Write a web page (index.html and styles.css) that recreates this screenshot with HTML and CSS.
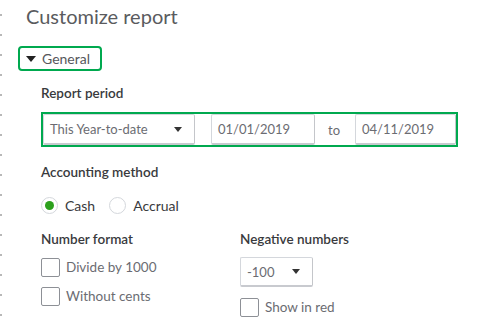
FILE: index.html
```html
<!DOCTYPE html>
<html lang="en">
<head>
	<meta charset="UTF-8">
	<title>Customize report</title>
	<link rel="stylesheet" href="styles.css">
</head>
<body>
	<div class="panel">
		<h1 class="title">Customize report</h1>

		<div class="section-toggle">
			<span class="caret"></span>
			<span>General</span>
		</div>

		<div class="section">
			<div class="label">Report period</div>
			<div class="period">
				<div class="select period-select">
					<span>This Year-to-date</span>
					<span class="caret small"></span>
				</div>
				<div class="input date">01/01/2019</div>
				<div class="to">to</div>
				<div class="input date">04/11/2019</div>
			</div>

			<div class="label method">Accounting method</div>
			<div class="radios">
				<label class="radio"><span class="dot on"></span>Cash</label>
				<label class="radio"><span class="dot"></span>Accrual</label>
			</div>

			<div class="formats">
				<div class="col">
					<div class="label">Number format</div>
					<label class="check"><span class="box"></span>Divide by 1000</label>
					<label class="check"><span class="box"></span>Without cents</label>
				</div>
				<div class="col">
					<div class="label">Negative numbers</div>
					<div class="select neg-select">
						<span>-100</span>
						<span class="caret small"></span>
					</div>
					<label class="check"><span class="box"></span>Show in red</label>
				</div>
			</div>
		</div>
	</div>
</body>
</html>
```

FILE: styles.css
```css
body
{
	margin: 0;
	background: #fff;
	font-family: Lato, "Open Sans", sans-serif;
	color: #393a3d;
}

.panel
{
	min-height: 324px;
	box-sizing: border-box;
	padding: 3px 0 0 18px;
	background-image: radial-gradient(circle, #b8b8b8 0.8px, transparent 1px);
	background-size: 2px 20px;
	background-position: 0 5px;
	background-repeat: repeat-y;
}

.title
{
	margin: 0 0 0 8px;
	font-size: 20px;
	font-weight: normal;
	line-height: 26px;
	color: #5a5b5e;
}

.section-toggle
{
	margin-top: 17px;
	width: 84px;
	height: 25px;
	box-sizing: border-box;
	border: 2px solid #00a94f;
	border-radius: 4px;
	display: flex;
	align-items: center;
	gap: 6px;
	padding-left: 6px;
	font-size: 14px;
	color: #56575b;
}

.caret
{
	width: 0;
	height: 0;
	border-left: 5px solid transparent;
	border-right: 5px solid transparent;
	border-top: 6px solid #222;
}

.caret.small
{
	border-left-width: 4px;
	border-right-width: 4px;
	border-top-width: 5px;
	border-top-color: #333;
}

.section
{
	padding-left: 23px;
}

.label
{
	font-size: 13.5px;
	font-weight: 600;
	color: #393a3d;
	line-height: 17px;
	margin-top: 14px;
}

.period
{
	margin-top: 10px;
	width: 417px;
	height: 35px;
	box-sizing: border-box;
	border: 2px solid #00a94f;
	display: flex;
	align-items: center;
	font-size: 13px;
	color: #6b6c72;
}

.select, .input
{
	box-sizing: border-box;
	height: 31px;
	background: #fff;
	border: 1px solid #d4d7dc;
	border-right-color: #c4c6ca;
	border-bottom: 2px solid #c8cacf;
	border-radius: 2px;
	display: flex;
	align-items: center;
	padding: 0 6px;
	font-size: 13px;
	color: #6b6c72;
}

.select
{
	justify-content: space-between;
}

.period-select
{
	width: 152px;
	padding-right: 12px;
}

.date
{
	margin-left: 16px;
	width: 104px;
}

.date:last-child
{
	margin-left: 14px;
	width: 101px;
}

.to
{
	margin-left: 13px;
	width: 13px;
}

.method
{
	margin-top: 17px;
}

.radios
{
	display: flex;
	gap: 14px;
	margin-top: 16px;
	font-size: 14px;
	color: #393a3d;
}

.radio
{
	display: flex;
	align-items: center;
	gap: 7px;
}

.dot
{
	width: 17px;
	height: 17px;
	box-sizing: border-box;
	border: 1px solid #d4d7dc;
	border-radius: 50%;
	display: flex;
	align-items: center;
	justify-content: center;
}

.dot.on::after
{
	content: "";
	width: 9px;
	height: 9px;
	border-radius: 50%;
	background: #2ca01c;
}

.formats
{
	display: flex;
}

.formats .col:first-child
{
	width: 199px;
}

.formats .label
{
	margin-top: 17px;
	margin-bottom: 9px;
}

.check
{
	display: flex;
	align-items: center;
	gap: 6px;
	font-size: 13.5px;
	color: #6b6c72;
	height: 20px;
	margin-bottom: 9px;
}

.box
{
	width: 19px;
	height: 19px;
	box-sizing: border-box;
	border: 1px solid #8d9096;
	border-radius: 2px;
	background: #fff;
}

.neg-select
{
	width: 73px;
	height: 30px;
	padding-right: 12px;
	margin-bottom: 10px;
}
```
